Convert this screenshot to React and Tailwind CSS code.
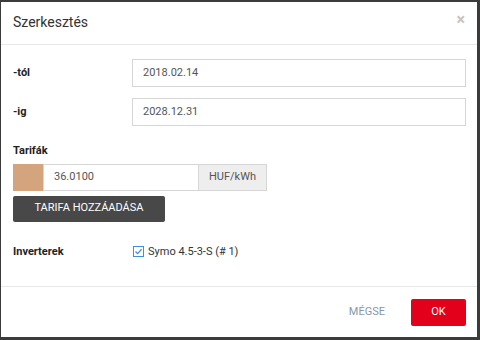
import React from 'react';

const font = { fontFamily: 'Roboto, "Liberation Sans", sans-serif' };

const Field = ({ label, value }) => (
  <div className="flex items-center">
    <div className="w-[119px] text-[11px] font-bold text-[#222]">{label}</div>
    <div className="flex-1 h-[28px] border border-[#d6d6d6] flex items-center px-[10px] text-[11px] text-[#555]">
      {value}
    </div>
  </div>
);

const App = () => {
  return (
    <div className="w-[480px] h-[340px] bg-[#3b3b3b] pt-[2px] pl-[1px] pr-[3px] pb-[3px]" style={font}>
      <div className="bg-white h-full flex flex-col">
        <div className="h-[43px] border-b border-[#e8e8e8] flex items-center justify-between pl-[12px] pr-[12px]">
          <h3 className="text-[14px] text-[#333] pb-[1px]">Szerkesztés</h3>
          <span className="text-[16px] font-bold text-[#c4c4c4] leading-none -mt-[6px]">×</span>
        </div>

        <div className="flex-1 pl-[12px] pr-[11px] pt-[14px] flex flex-col">
          <div className="flex flex-col gap-[11px]">
            <Field label="-tól" value="2018.02.14" />
            <Field label="-ig" value="2028.12.31" />
          </div>

          <div className="mt-[17px] text-[11px] font-bold text-[#222]">Tarifák</div>
          <div className="mt-[4px] flex h-[27px] w-[254px]">
            <div className="w-[30px] bg-[#d4a47f]" />
            <div className="w-[156px] border border-[#d6d6d6] flex items-center pl-[10px] text-[11px] text-[#555]">
              36.0100
            </div>
            <div className="flex-1 bg-[#eeeeee] border border-l-0 border-[#d6d6d6] flex items-center justify-center text-[11px] text-[#555]">
              HUF/kWh
            </div>
          </div>
          <button className="mt-[5px] w-[152px] h-[26px] bg-[#484848] rounded-[2px] text-white text-[11px] uppercase flex items-center justify-center">
            Tarifa hozzáadása
          </button>

          <div className="mt-[22px] flex items-center">
            <div className="w-[120px] text-[11px] font-bold text-[#222]">Inverterek</div>
            <svg width="11" height="11" viewBox="0 0 11 11" className="mr-[4px]">
              <rect x="0.5" y="0.5" width="10" height="10" fill="white" stroke="#3f8ee0" />
              <path d="M2.5 5.5 L4.6 7.6 L8.6 3.2" fill="none" stroke="#3f8ee0" strokeWidth="1.3" />
            </svg>
            <span className="text-[11px] text-[#333]">Symo 4.5-3-S (# 1)</span>
          </div>
        </div>

        <div className="h-[51px] border-t border-[#e8e8e8] flex items-center justify-end pr-[11px] pt-[1px]">
          <span className="text-[11px] text-[#8a97a8] mr-[26px]">MÉGSE</span>
          <button className="w-[55px] h-[27px] bg-[#e2001a] rounded-[2px] text-white text-[11px]">OK</button>
        </div>
      </div>
    </div>
  );
};

export default App;
